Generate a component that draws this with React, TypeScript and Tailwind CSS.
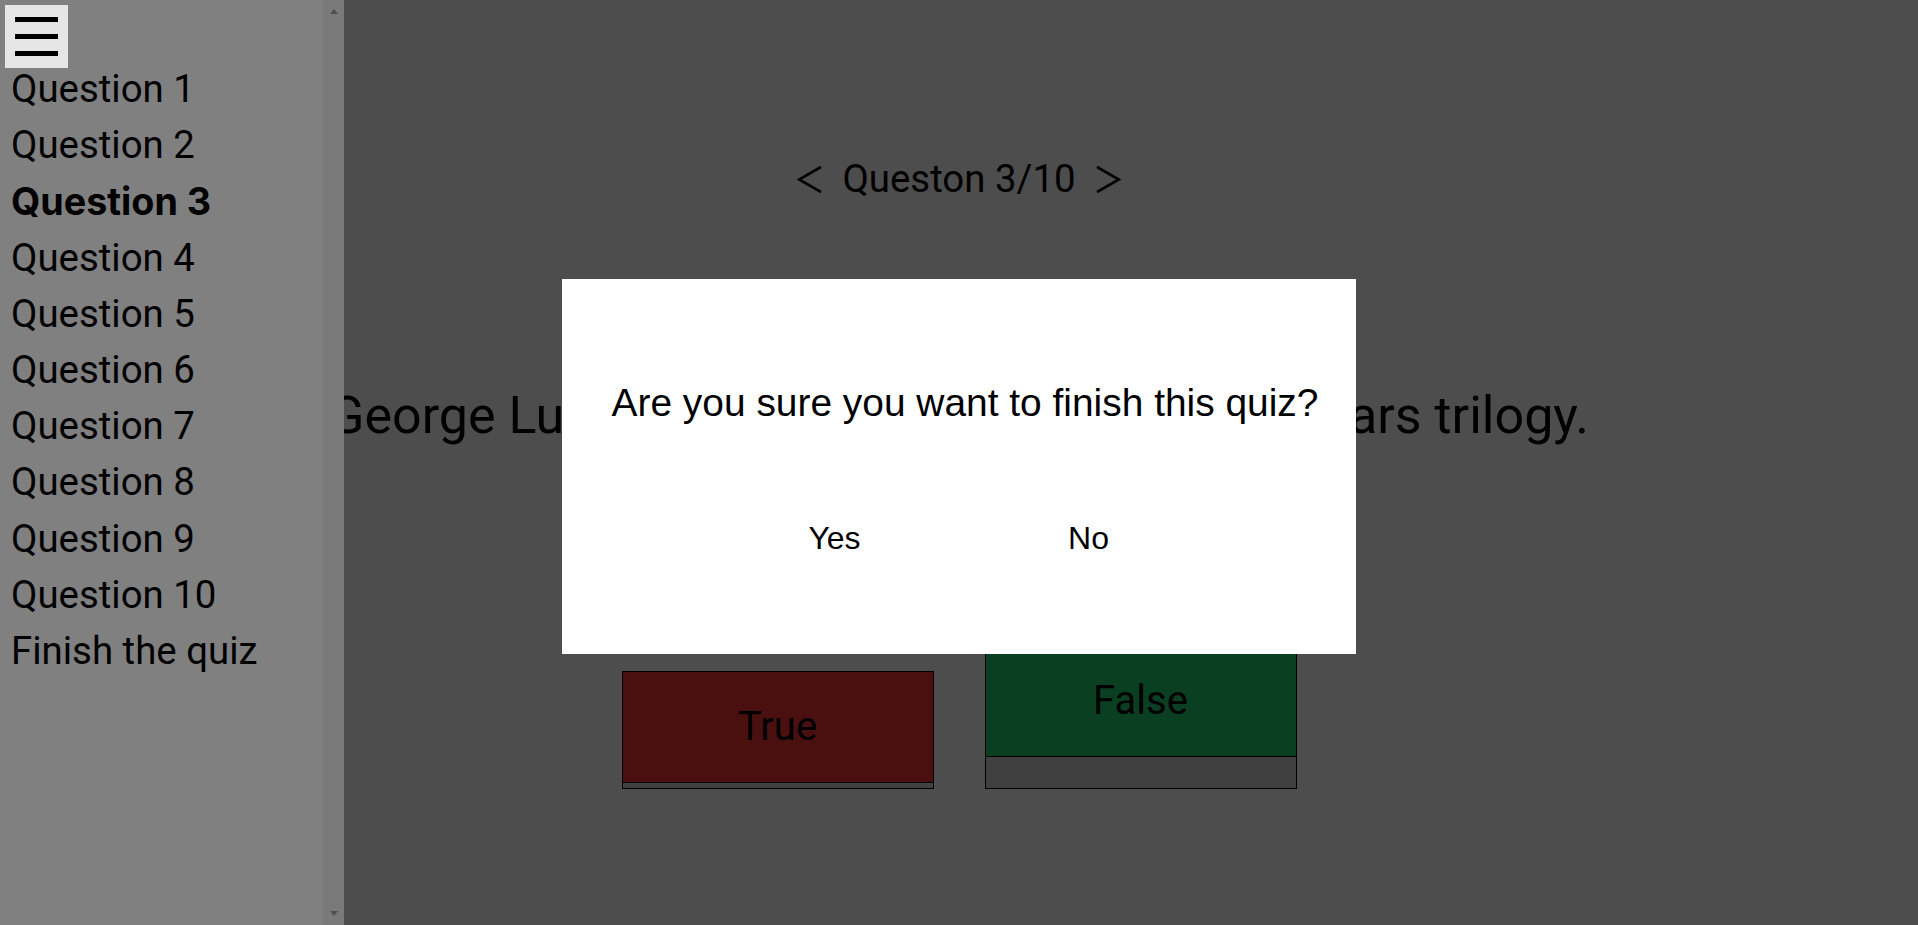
import React, { useState } from "react";

const questions = Array.from({ length: 10 }, (_, i) => `Question ${i + 1}`);

function Chevron({ dir }: { dir: "left" | "right" }) {
  return (
    <svg width="25" height="29" viewBox="0 0 25 29" fill="none" stroke="black" strokeWidth="2.6" strokeLinejoin="miter">
      {dir === "left" ? <polyline points="24,2 2,14.5 24,27" /> : <polyline points="1,2 23,14.5 1,27" />}
    </svg>
  );
}

export default function App() {
  const [current] = useState(3);
  const [confirmOpen] = useState(true);

  return (
    <div className="relative w-full h-[925px] overflow-hidden bg-[#4d4d4d] font-['Roboto',sans-serif] text-black">
      {/* quiz */}
      <main className="flex flex-col items-center pt-[155px]">
        <div className="flex items-center text-[38.4px] leading-[48px]">
          <button>
            <Chevron dir="left" />
          </button>
          <span className="ml-[20px] mr-[20px]">Queston {current}/10</span>
          <button>
            <Chevron dir="right" />
          </button>
        </div>
        <p className="mt-[183px] text-[52px] leading-[60px] whitespace-nowrap">
          George Lucas directed all the original Star Wars trilogy.
        </p>
        <div className="mt-[199px] flex items-end gap-[51px]">
          <AnswerButton label="True" color="bg-[#4a1010]" depth="h-[5px]" />
          <AnswerButton label="False" color="bg-[#0b3f22]" depth="h-[31px]" />
        </div>
      </main>

      {/* side menu */}
      <aside className="absolute top-0 left-0 bottom-0 w-[344px] flex bg-[#808080]">
        <div className="flex-1">
          <div className="h-[61px] pl-[5px] pt-[5px]">
            <button className="w-[63px] h-[63px] bg-[#e6e6e6] flex flex-col gap-[12px] pt-[12px] pl-[10px]">
              <span className="block w-[43px] h-[5px] bg-black" />
              <span className="block w-[43px] h-[5px] bg-black" />
              <span className="block w-[43px] h-[5px] bg-black" />
            </button>
          </div>
          <ul className="pl-[11px] text-[38.4px] leading-[56.2px]">
            {questions.map((q, i) => (
              <li key={q} className={i + 1 === current ? "font-['Inter',sans-serif] font-bold text-[37.7px]" : ""}>
                {q}
              </li>
            ))}
            <li>Finish the quiz</li>
          </ul>
        </div>
        <div className="w-[21px] bg-[#7a7a7a] flex flex-col justify-between items-center py-[9px]">
          <span className="w-0 h-0 border-x-[4.5px] border-x-transparent border-b-[5px] border-b-[#505050]" />
          <span className="w-0 h-0 border-x-[4.5px] border-x-transparent border-t-[5px] border-t-[#505050]" />
        </div>
      </aside>

      {/* confirm dialog */}
      {confirmOpen && (
        <div className="absolute left-[562px] top-[279px] w-[794px] h-[375px] bg-white font-['Liberation_Sans',Arial,sans-serif] flex flex-col items-center">
          <p className="mt-[95px] pl-[12px] text-[38.9px]">Are you sure you want to finish this quiz?</p>
          <div className="mt-[82px] ml-[5px] flex">
            <button className="w-[254px] text-[32px]">Yes</button>
            <button className="w-[254px] text-[32px]">No</button>
          </div>
        </div>
      )}
    </div>
  );
}

function AnswerButton({ label, color, depth }: { label: string; color: string; depth: string }) {
  return (
    <button className="w-[312px] border border-black bg-[#404040] flex flex-col">
      <span className={`h-[111px] border-b border-black flex items-center justify-center text-[40px] ${color}`}>
        {label}
      </span>
      <span className={`block ${depth}`} />
    </button>
  );
}
